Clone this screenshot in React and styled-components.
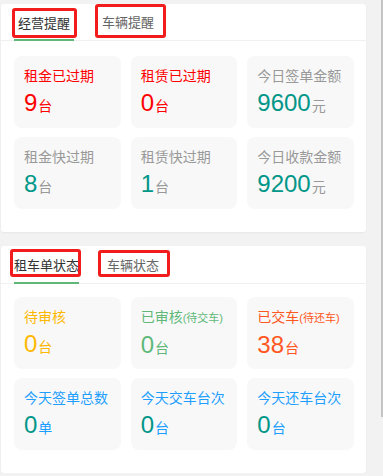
import React from 'react';
import styled, { createGlobalStyle } from 'styled-components';

const GlobalStyle = createGlobalStyle`
  html, body {
    margin: 0;
    padding: 0;
    background: #f2f2f2;
    font-family: "Liberation Sans", "Noto Sans CJK SC", sans-serif;
  }
`;

const Page = styled.div`
  width: 365px;
  padding: 4px 0 0 1px;
  display: flex;
  flex-direction: column;
  gap: 14px;
`;

const Card = styled.div`
  background: #fff;
  border-radius: 3px;
  box-shadow: 0 1px 2px rgba(0, 0, 0, 0.05);
`;

const TabBar = styled.div`
  display: flex;
  gap: ${p => p.$gap}px;
  height: ${p => p.$height}px;
  padding-left: 13px;
  border-bottom: 1px solid #f0f0f0;
`;

const Tab = styled.div`
  position: relative;
  display: flex;
  align-items: center;
  padding: 0 ${p => p.$pad}px;
  font-size: 13px;
  color: ${p => (p.$active ? '#333' : '#666')};
  white-space: nowrap;
  border-bottom: 2px solid ${p => (p.$active ? '#5fb878' : 'transparent')};
  margin-bottom: -1px;
  padding-top: ${p => p.$shift || 0}px;
`;

// red annotation box drawn over each tab
const Mark = styled.div`
  position: absolute;
  border: 3px solid #f21c1c;
  border-radius: 3px;
  box-sizing: border-box;
`;

const Grid = styled.div`
  display: grid;
  grid-template-columns: repeat(3, 1fr);
  column-gap: 10px;
  row-gap: 9px;
  padding: ${p => p.$top}px 12px 23px 13px;
`;

const Tile = styled.div`
  background: #f8f8f8;
  border-radius: 8px;
  padding: 10px 10px;
  height: 52px;
`;

const Label = styled.div`
  font-size: 14px;
  line-height: 20px;
  color: ${p => p.$color};
  white-space: nowrap;
`;

const Sub = styled.span`
  font-size: 11px;
`;

const Value = styled.div`
  margin-top: 2px;
  line-height: 30px;
  white-space: nowrap;
`;

const Num = styled.span`
  font-size: 24px;
  color: ${p => p.$color};
`;

const Unit = styled.span`
  font-size: 14px;
  color: ${p => p.$color};
  margin-left: 1px;
`;

const ScrollThumb = styled.div`
  position: fixed;
  right: 0;
  top: 0;
  width: 2px;
  height: 417px;
  background: #c4c4c4;
`;

const RED = '#ff0000';
const GRAY = '#999';
const TEAL = '#009688';
const YELLOW = '#ffb800';
const GREEN = '#5fb878';
const ORANGE = '#ff5722';
const BLUE = '#1e9fff';

const reminders = [
  { label: '租金已过期', value: '9', unit: '台', lc: RED, nc: RED, uc: RED },
  { label: '租赁已过期', value: '0', unit: '台', lc: RED, nc: RED, uc: RED },
  { label: '今日签单金额', value: '9600', unit: '元', lc: GRAY, nc: TEAL, uc: GRAY },
  { label: '租金快过期', value: '8', unit: '台', lc: GRAY, nc: TEAL, uc: GRAY },
  { label: '租赁快过期', value: '1', unit: '台', lc: GRAY, nc: TEAL, uc: GRAY },
  { label: '今日收款金额', value: '9200', unit: '元', lc: GRAY, nc: TEAL, uc: GRAY },
];

const orders = [
  { label: '待审核', value: '0', unit: '台', lc: YELLOW, nc: YELLOW, uc: YELLOW },
  { label: '已审核', sub: '(待交车)', value: '0', unit: '台', lc: GREEN, nc: GREEN, uc: GREEN },
  { label: '已交车', sub: '(待还车)', value: '38', unit: '台', lc: ORANGE, nc: ORANGE, uc: ORANGE },
  { label: '今天签单总数', value: '0', unit: '单', lc: BLUE, nc: TEAL, uc: BLUE },
  { label: '今天交车台次', value: '0', unit: '台', lc: BLUE, nc: TEAL, uc: BLUE },
  { label: '今天还车台次', value: '0', unit: '台', lc: BLUE, nc: TEAL, uc: BLUE },
];

function StatTile({ item }) {
  return (
    <Tile>
      <Label $color={item.lc}>
        {item.label}
        {item.sub && <Sub>{item.sub}</Sub>}
      </Label>
      <Value>
        <Num $color={item.nc}>{item.value}</Num>
        <Unit $color={item.uc}>{item.unit}</Unit>
      </Value>
    </Tile>
  );
}

export default function App() {
  return (
    <>
      <GlobalStyle />
      <Page>
        <Card>
          <TabBar $gap={26} $height={36}>
            <Tab $active $pad={4} $shift={1}>
              经营提醒
              <Mark style={{ left: -2, top: 4, width: 65, height: 30 }} />
            </Tab>
            <Tab $pad={2}>
              车辆提醒
              <Mark style={{ left: -5, top: 0, width: 71, height: 34 }} />
            </Tab>
          </TabBar>
          <Grid $top={15}>
            {reminders.map(item => (
              <StatTile key={item.label} item={item} />
            ))}
          </Grid>
        </Card>

        <Card>
          <TabBar $gap={26} $height={37}>
            <Tab $active $pad={0}>
              租车单状态
              <Mark style={{ left: -4, top: 3, width: 71, height: 28 }} />
            </Tab>
            <Tab $pad={2}>
              车辆状态
              <Mark style={{ left: -7, top: 4, width: 72, height: 27 }} />
            </Tab>
          </TabBar>
          <Grid $top={13}>
            {orders.map(item => (
              <StatTile key={item.label} item={item} />
            ))}
          </Grid>
        </Card>
      </Page>
      <ScrollThumb />
    </>
  );
}
